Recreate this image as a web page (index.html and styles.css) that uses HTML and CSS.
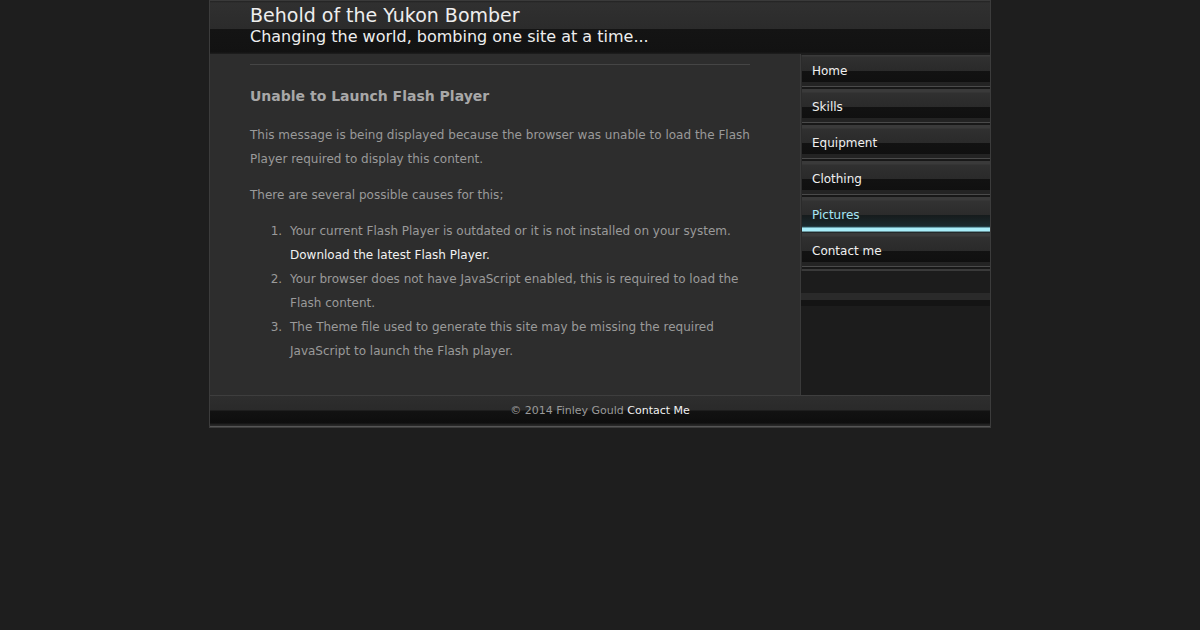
FILE: index.html
```html
<!DOCTYPE html>
<html lang="en">
<head>
  <meta charset="UTF-8" />
  <title>Behold of the Yukon Bomber</title>
  <link rel="stylesheet" href="styles.css">
</head>
<body>
  <div class="wrap">
    <div class="header">
      <h1 class="site-title">Behold of the Yukon Bomber</h1>
      <p class="site-slogan">Changing the world, bombing one site at a time...</p>
    </div>

    <div class="middle">
      <div class="main">
        <hr class="rule">
        <h2>Unable to Launch Flash Player</h2>
        <p>This message is being displayed because the browser was unable to load the Flash Player required to display this content.</p>
        <p>There are several possible causes for this;</p>
        <ol>
          <li>Your current Flash Player is outdated or it is not installed on your system. <a href="#">Download the latest Flash Player.</a></li>
          <li>Your browser does not have JavaScript enabled, this is required to load the Flash content.</li>
          <li>The Theme file used to generate this site may be missing the required JavaScript to launch the Flash player.</li>
        </ol>
      </div>

      <!-- menu -->
      <div class="sidebar">
        <ul class="menu">
          <li><a href="#">Home</a></li>
          <li><a href="#">Skills</a></li>
          <li><a href="#">Equipment</a></li>
          <li><a href="#">Clothing</a></li>
          <li class="active"><a href="#">Pictures</a></li>
          <li><a href="#">Contact me</a></li>
        </ul>
        <div class="menu-end"></div>
      </div>
    </div>

    <div class="footer">
      &copy; 2014 Finley Gould <a href="#">Contact Me</a>
    </div>
  </div>
</body>
</html>
```

FILE: styles.css
```css
body { margin: 0; background: #1e1e1e; font-family: "DejaVu Sans", Verdana, sans-serif; color: #9a9a9a; }
a { color: #f2f2f2; text-decoration: none; }

.wrap { width: 780px; margin: 0 auto; border: 1px solid #3c3c3c; border-top: 0; background: #2d2d2d; }

/* Header */
.header { height: 54px; padding-left: 40px; box-sizing: border-box;
  background: linear-gradient(#232323 0, #303030 2px, #2b2b2b 28px, #141414 28px, #121212 51px, #262626 54px);
  border-top: 1px solid #3a3a3a; }
.site-title { margin: 0; padding-top: 3px; font-size: 19px; font-weight: normal; color: #eee; line-height: 22px; }
.site-slogan { margin: 1px 0 0; font-size: 16px; color: #eee; line-height: 20px; }

/* Middle */
.middle { display: flex; }
.main { width: 500px; padding: 10px 50px 32px 40px; font-size: 12px; line-height: 24px; }
.rule { border: 0; border-top: 1px solid #454545; margin: 0; }
.main h2 { font-size: 14px; color: #a8a8a8; margin: 19px 0 15px; line-height: 24px; }
.main p { margin: 0 0 12px; }
.main ol { margin: 0; padding-left: 36px; }
.main li { padding-left: 4px; }

.sidebar { width: 189px; border-left: 1px solid #3a3a3a; background: #1c1c1c; padding-top: 1px; }
.menu { list-style: none; margin: 0; padding: 0; }
.menu li { height: 36px; border-left: 1px solid #2b2b2b;
  background: linear-gradient(#3a3a3a 0, #3a3a3a 1px, #303030 2px, #2a2a2a 16px, #121212 16px, #101010 27px, #232323 27px, #232323 31px, #4a4a4a 31px, #4a4a4a 32px, #181818 32px, #181818 34px, #3a3a3a 34px); }
.menu a { display: block; padding: 8px 10px 0; line-height: 16px; font-size: 12px; color: #f0f0f0; }
.menu li.active {
  background: linear-gradient(#3a3a3a 0, #3a3a3a 1px, #323232 2px, #2b2b2b 16px, #161b1c 16px, #1a2a2e 27px, #2d5560 28px, #a8eefa 29px, #a8eefa 32px, #2d3a3c 33px, #181818 34px, #3a3a3a 34px); }
.menu li.active a { color: #a6e6f4; }
.menu-end { height: 36px; background: linear-gradient(#1c1c1c 0, #1c1c1c 22px, #2a2a2a 22px, #2a2a2a 29px, #141414 29px, #141414 35px, #1c1c1c 35px); }

/* Footer */
.footer { height: 30px; border-top: 1px solid #3e3e3e; border-bottom: 1px solid #555; text-align: center; font-size: 11px; line-height: 30px;
  background: linear-gradient(#2e2e2e 0, #2a2a2a 14px, #121212 15px, #0e0e0e 27px, #1e1e1e 28px, #2a2a2a 30px); }
```
